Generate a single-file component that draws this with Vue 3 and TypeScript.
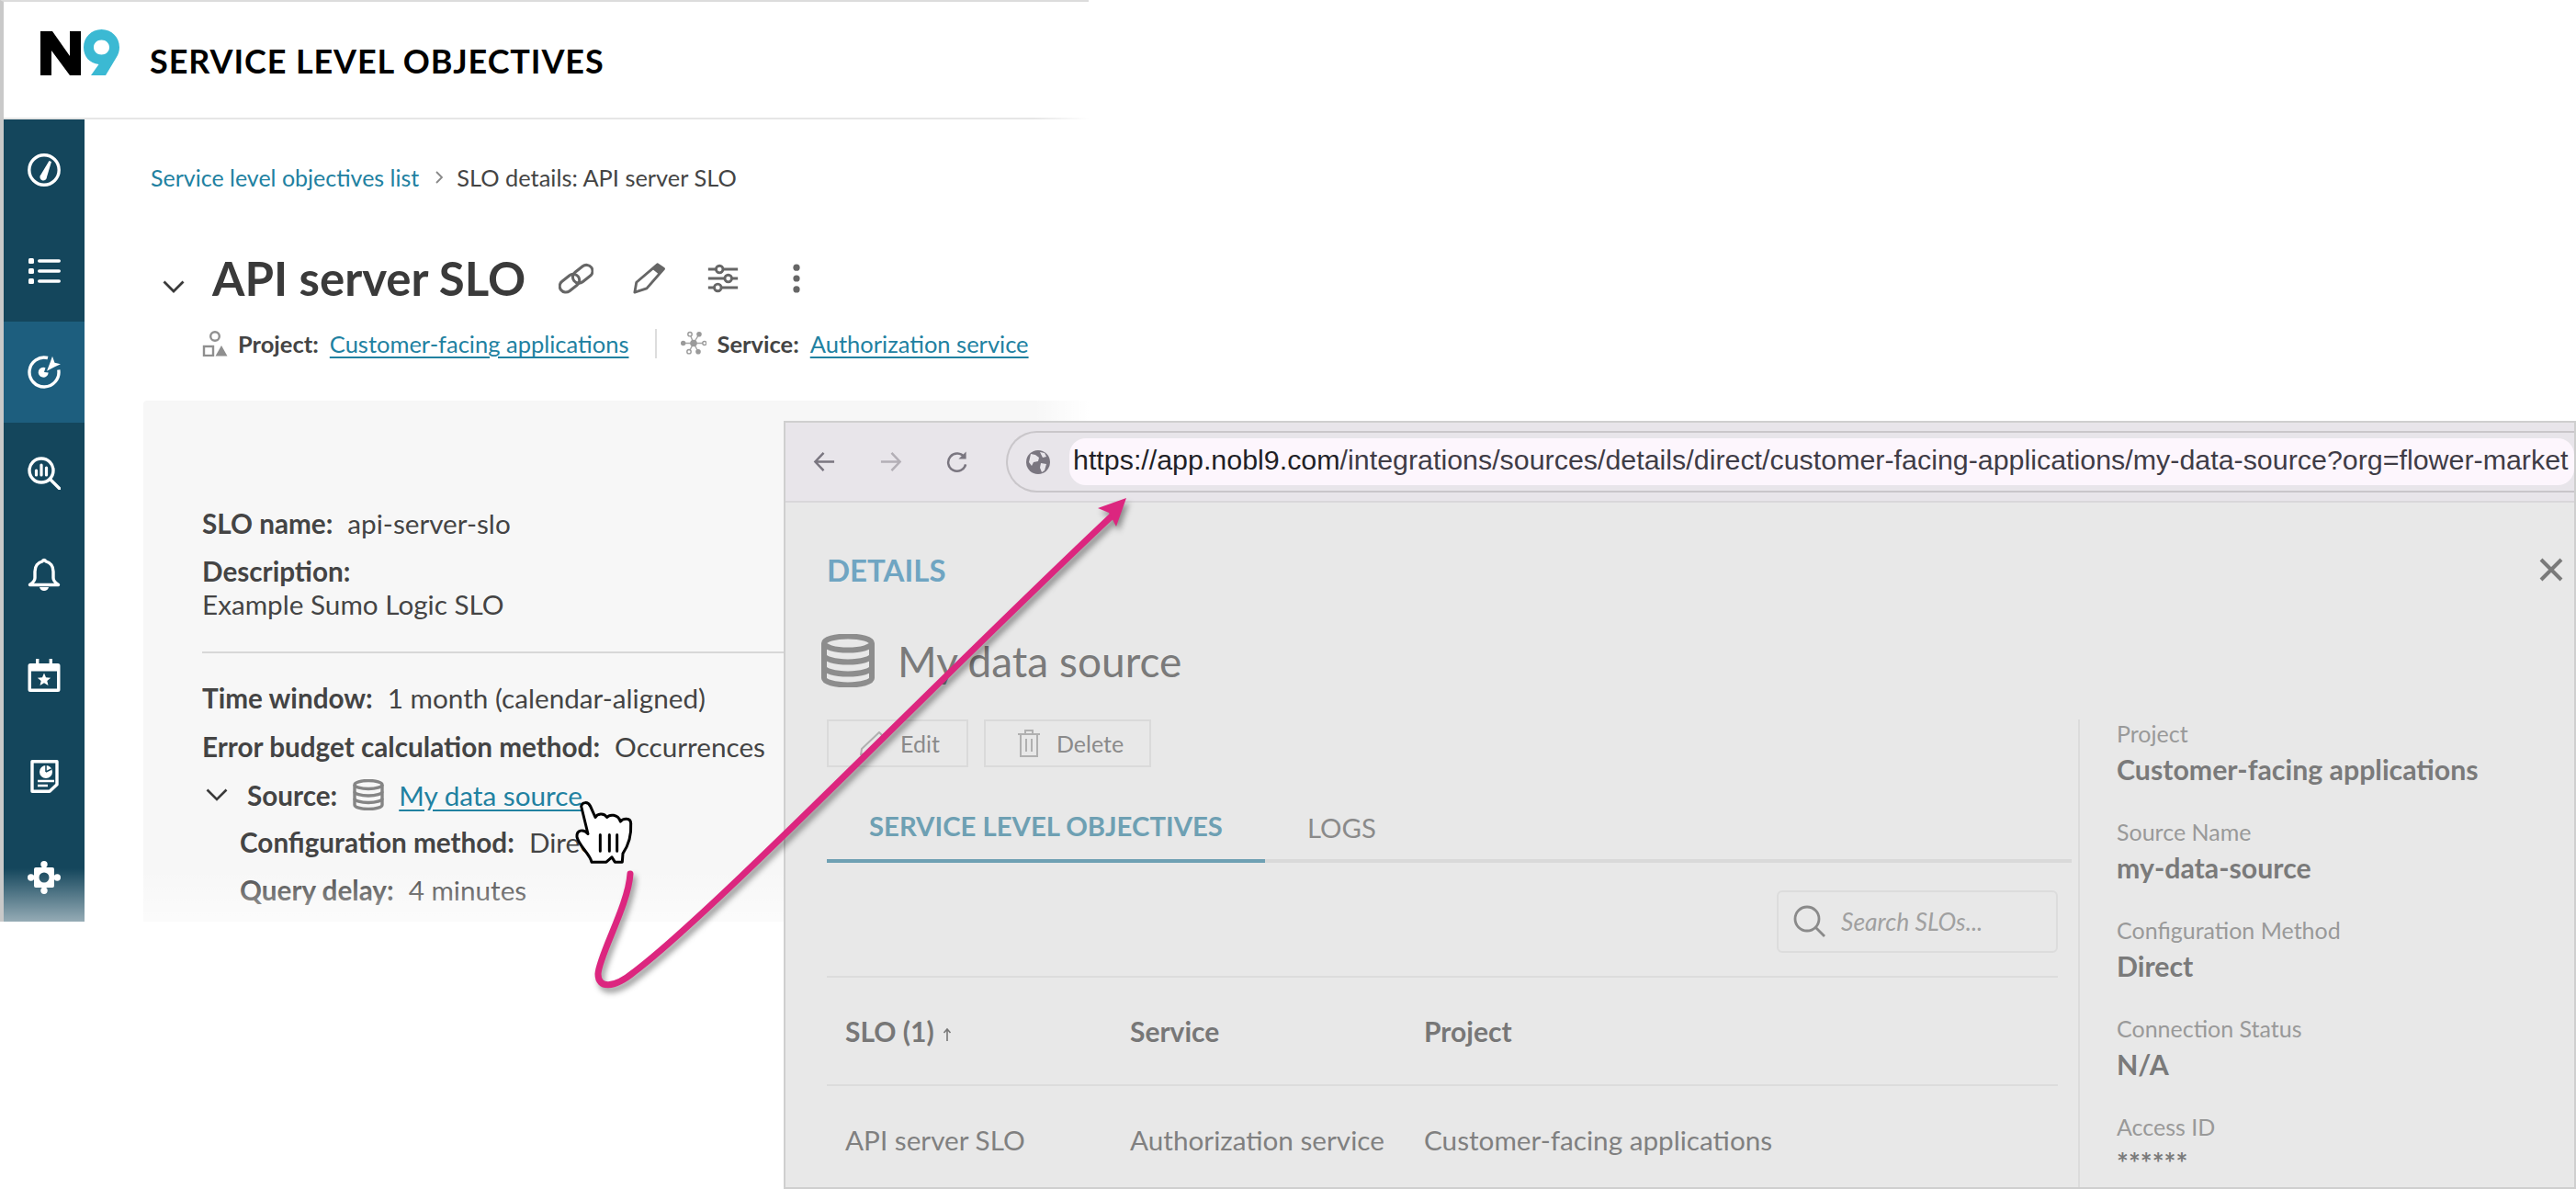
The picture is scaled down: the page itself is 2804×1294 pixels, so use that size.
<template>
  <div class="page">
    <div class="app">
      <header class="top">
        <svg class="logo" viewBox="0 0 88 52">
          <path d="M0 2h13l19 27V2h12v48H32L12 23v27H0z" fill="#000" />
          <path fill-rule="evenodd" d="M66.500 0C77.500 0 86 8.500 86 19.500c0 4-1.200 7.500-3 10.500L71 50H55l8.500-12C53.500 37 47 29.500 47 19.500 47 8.500 55.500 0 66.500 0zm0 11.500c-4.800 0-8.500 3.500-8.500 8s3.700 8 8.500 8 8.500-3.500 8.500-8-3.700-8-8.500-8z" fill="#3bb9d3" stroke="#fff" stroke-width="3" paint-order="stroke" />
        </svg>
        <h1>SERVICE LEVEL OBJECTIVES</h1>
      </header>
      <div class="body">
        <nav class="side">
          <div class="nav-item">
            <svg viewBox="0 0 36 36"><circle cx="18" cy="18" r="16.200" fill="none" stroke="#fff" stroke-width="3.400" /><path d="M23.500 8l2.500 1-5 16.500a3.800 3.800 0 1 1-6.500-2.500z" fill="#fff" /></svg>
          </div>
          <div class="nav-item">
            <svg viewBox="0 0 36 36"><g fill="#fff"><rect x="1" y="4" width="6" height="6" rx="1.500" /><rect x="1" y="15" width="6" height="6" rx="1.500" /><rect x="1" y="26" width="6" height="6" rx="1.500" /><rect x="11" y="5.300" width="25" height="3.400" rx="1.700" /><rect x="11" y="16.300" width="25" height="3.400" rx="1.700" /><rect x="11" y="27.300" width="25" height="3.400" rx="1.700" /></g></svg>
          </div>
          <div class="nav-item active">
            <svg viewBox="0 0 36 36"><path d="M22 2.500A16 16 0 1 0 33.800 15.500" fill="none" stroke="#fff" stroke-width="3.400" /><path d="M19.500 13.200a5.500 5.500 0 1 0 3.200 5.300l-4.700-.5z" fill="#fff" /><path d="M27 .8l2.500 7 6.500 1.500-6.500 3-8.500 4.500 3.500-9z" fill="#fff" /></svg>
          </div>
          <div class="nav-item">
            <svg viewBox="0 0 36 36"><circle cx="15" cy="15" r="13" fill="none" stroke="#fff" stroke-width="3.400" /><path d="M24.500 24.500L35 35" stroke="#fff" stroke-width="3.400" stroke-linecap="round" /><g stroke="#fff" stroke-width="3.200" stroke-linecap="round"><path d="M9.500 15v5" /><path d="M15 9v11" /><path d="M20.500 12v8" /></g></svg>
          </div>
          <div class="nav-item">
            <svg viewBox="0 0 36 36"><path d="M18 2.500c1 0 1.500 .6 1.700 1.400C25 5.100 28 9.500 28 15v7c0 3 2 5 5.500 7.500h-31C6 27 8 25 8 22v-7c0-5.500 3-9.900 8.300-11.100C16.500 3.100 17 2.500 18 2.500z" fill="none" stroke="#fff" stroke-width="3.400" stroke-linejoin="round" /><path d="M13 32h10c-.6 2.500-2.600 4-5 4s-4.400-1.500-5-4z" fill="#fff" /></svg>
          </div>
          <div class="nav-item">
            <svg viewBox="0 0 36 36"><path d="M9 0h3.400v5H23.600V0H27v5h6a2.500 2.500 0 0 1 2.500 2.500v26A2.500 2.500 0 0 1 33 36H3a2.500 2.500 0 0 1-2.500-2.500v-26A2.500 2.500 0 0 1 3 5h6zM4 13.500V32.500h28V13.500z" fill="#fff" /><path d="M18 15.500l2 4.800 5.200 .4-3.900 3.300 1.200 5-4.500-2.700-4.500 2.700 1.200-5-3.900-3.300 5.200-.4z" fill="#fff" /></svg>
          </div>
          <div class="nav-item">
            <svg viewBox="0 0 36 36"><path d="M5 1.700h27v25l-8 7.600H5z" fill="none" stroke="#fff" stroke-width="3.400" stroke-linejoin="round" /><circle cx="20" cy="13" r="7" fill="#fff" /><path d="M20 13V6M20 13l6-3" stroke="#14465c" stroke-width="1.500" /><path d="M11 23h18M11 28h11" stroke="#fff" stroke-width="2.600" /></svg>
          </div>
          <div class="nav-item">
            <svg viewBox="0 0 36 36"><g fill="#fff"><rect x="7" y="7" width="22" height="22" rx="2" /><circle cx="18" cy="3.700" r="3.700" /><circle cx="18" cy="32.300" r="3.700" /><circle cx="3.700" cy="18" r="3.700" /><circle cx="32.300" cy="18" r="3.700" /></g><circle cx="18" cy="18" r="5.500" fill="#14465c" /></svg>
          </div>
        </nav>
        <main class="main">
          <div class="crumbs">
            <a class="lnk plain">Service level objectives list</a>
            <svg class="crumb-sep" viewBox="0 0 10 16"><path d="M2 2l6 6-6 6" fill="none" stroke="#888" stroke-width="1.800" /></svg>
            <span>SLO details: API server SLO</span>
          </div>
          <div class="title-row">
            <svg class="title-chev" viewBox="0 0 24 14"><path d="M1.500 1.500L12 12 22.500 1.500" fill="none" stroke="#3a3a3a" stroke-width="2.800" /></svg>
            <h2>API server SLO</h2>
            <div class="tools">
              <svg viewBox="0 0 40 40"><g fill="none" stroke="#666" stroke-width="3.200"><rect x="0.100" y="18.500" width="25" height="14" rx="7" transform="rotate(-38 12.600 25.500)" /><rect x="15.100" y="8" width="25" height="14" rx="7" transform="rotate(-38 27.600 15)" /></g></svg>
              <svg viewBox="0 0 40 40"><path d="M29 4L5 24.500 3 36 16.800 31.500 36.400 9z" fill="none" stroke="#666" stroke-width="3" stroke-linejoin="round" /><path d="M29.400 3.500l7 5.300-5.400 6.700-7.500-6z" fill="#666" /></svg>
              <svg viewBox="0 0 40 40"><g fill="none" stroke="#666" stroke-width="3"><path d="M3 9.500h9M20 9.500h17M3 20h19M30 20h7M3 30.500h7M18 30.500h19" /><circle cx="16" cy="9.500" r="4" /><circle cx="26" cy="20" r="4" /><circle cx="14" cy="30.500" r="4" /></g></svg>
              <svg viewBox="0 0 40 40"><g fill="#666"><circle cx="20" cy="7.500" r="3.800" /><circle cx="20" cy="20" r="3.800" /><circle cx="20" cy="32.500" r="3.800" /></g></svg>
            </div>
          </div>
          <div class="meta">
            <svg class="meta-icon" viewBox="0 0 28 28"><g fill="none" stroke="#8f8f8f" stroke-width="2.400"><circle cx="14" cy="6" r="4.800" /><rect x="2" y="17" width="10" height="10" /></g><path d="M21 16l6.500 11.500h-13z" fill="#8f8f8f" /></svg>
            <b>Project:</b>
            <a class="lnk">Customer-facing applications</a>
            <i class="meta-sep"></i>
            <svg class="meta-icon" viewBox="0 0 28 28">
              <path d="M14 13.500L10 3.700M14 13.500L20 3.700M14 13.500H2.500M14 13.500H26M14 13.500L9 22.700M14 13.500L19 22.700" stroke="#a5a5a5" stroke-width="1.400" />
              <g fill="#9a9a9a"><circle cx="14" cy="13.500" r="3.800" /><circle cx="20" cy="3.700" r="2.800" /><circle cx="2.700" cy="13.500" r="2.700" /><circle cx="19" cy="22.700" r="2.800" /></g>
              <g fill="#fff" stroke="#9a9a9a" stroke-width="1.400"><circle cx="10" cy="3.700" r="2.200" /><circle cx="25.800" cy="13.500" r="2" /><circle cx="9" cy="22.700" r="2.200" /></g>
            </svg>
            <b>Service:</b>
            <a class="lnk">Authorization service</a>
          </div>
          <section class="panel">
            <div class="row"><b>SLO name:</b><span>api-server-slo</span></div>
            <div class="row desc-label"><b>Description:</b></div>
            <div class="row desc-text"><span>Example Sumo Logic SLO</span></div>
            <hr />
            <div class="row"><b>Time window:</b><span>1 month (calendar-aligned)</span></div>
            <div class="row next"><b>Error budget calculation method:</b><span>Occurrences</span></div>
            <div class="row next source">
              <svg class="src-chev" viewBox="0 0 24 14"><path d="M1.500 1.500L12 12 22.500 1.500" fill="none" stroke="#3a3a3a" stroke-width="2.600" /></svg>
              <b>Source:</b>
              <svg class="db" viewBox="0 0 34 34"><g fill="none" stroke="#858585" stroke-width="3.400"><ellipse cx="17" cy="6" rx="15" ry="4.500" /><path d="M2 6v22c0 2.500 6.700 4.500 15 4.500S32 30.500 32 28V6" /><path d="M2 13.500c0 2.500 6.700 4.500 15 4.500s15-2 15-4.500M2 21c0 2.500 6.700 4.500 15 4.500S32 23.500 32 21" /></g></svg>
              <a class="lnk">My data source</a>
            </div>
            <div class="row sub config"><b>Configuration method:</b><span>Direct</span></div>
            <div class="row sub query"><b>Query delay:</b><span>4 minutes</span></div>
          </section>
        </main>
      </div>
      <div class="fade-right"></div>
      <div class="fade-bottom"></div>
    </div>

    <div class="browser">
      <div class="toolbar">
        <svg class="nav-btn" viewBox="0 0 26 26"><path d="M24 13H3M12 3L2.500 13 12 23" fill="none" stroke="#7a7680" stroke-width="2.600" /></svg>
        <svg class="nav-btn" viewBox="0 0 26 26"><path d="M2 13h21M14 3l9.500 10L14 23" fill="none" stroke="#b3afb6" stroke-width="2.600" /></svg>
        <svg class="nav-btn" viewBox="0 0 26 26"><path d="M21.500 8A10 10 0 1 0 23 16" fill="none" stroke="#7a7680" stroke-width="2.600" /><path d="M23.500 1.500V10h-8.500z" fill="#7a7680" /></svg>
        <div class="omnibox">
          <svg class="globe" viewBox="0 0 26 26"><circle cx="13" cy="13" r="13" fill="#7a7680" /><path d="M5 4l5 1 4 3-1 4-5 1-2 4-3-4zM16 14l6 1-2 7-3 2-2-5zM15 2l5 1 2 4-4 1z" fill="#e8e5ea" /></svg>
          <div class="url"><span class="host">https://app.nobl9.com</span>/integrations/sources/details/direct/customer-facing-applications/my-data-source?org=flower-market</div>
        </div>
      </div>
      <div class="content">
        <div class="details-head">
          <span>DETAILS</span>
          <svg class="close" viewBox="0 0 26 26"><path d="M2 2l22 22M24 2L2 24" stroke="#7a7a7a" stroke-width="4" /></svg>
        </div>
        <div class="source-title">
          <svg class="db-big" viewBox="0 0 58 58"><g fill="none" stroke="#8d8d8d" stroke-width="6"><ellipse cx="29" cy="10" rx="26" ry="7.500" /><path d="M3 10v38c0 4 11.600 7.500 26 7.500S55 52 55 48V10" /><path d="M3 23c0 4 11.600 7.500 26 7.500S55 27 55 23M3 36c0 4 11.600 7.500 26 7.500S55 40 55 36" /></g></svg>
          <span>My data source</span>
        </div>
        <div class="split">
          <div class="left">
            <div class="actions">
              <button class="edit">
                <svg viewBox="0 0 26 26"><path d="M21 1l4 4L7 24l-6 1 1-6z" fill="none" stroke="#b0b0b0" stroke-width="2" /></svg>
                Edit
              </button>
              <button class="del">
                <svg viewBox="0 0 26 30"><path d="M1 5h24M9 5V1h8v4M4 5v24h18V5M10 10v14M16 10v14" fill="none" stroke="#b0b0b0" stroke-width="2" /></svg>
                Delete
              </button>
            </div>
            <div class="tabs">
              <div class="tab on">SERVICE LEVEL OBJECTIVES</div>
              <div class="tab">LOGS</div>
            </div>
            <div class="table">
              <div class="search">
                <svg viewBox="0 0 36 36"><circle cx="15" cy="15" r="13" fill="none" stroke="#8a8a8a" stroke-width="2.800" /><path d="M24.500 24.500L34 34" stroke="#8a8a8a" stroke-width="2.800" /></svg>
                <span>Search SLOs...</span>
              </div>
              <div class="tr th">
                <span>SLO (1)<svg class="sort" viewBox="0 0 10 16"><path d="M5 15V2M1.500 6L5 2l3.500 4" fill="none" stroke="#777" stroke-width="1.600" /></svg></span>
                <span>Service</span>
                <span>Project</span>
              </div>
              <div class="tr td">
                <span>API server SLO</span>
                <span>Authorization service</span>
                <span>Customer-facing applications</span>
              </div>
            </div>
          </div>
          <aside class="facts">
            <div v-for="f in facts" :key="f.label" class="fact">
              <div class="fact-label">{{ f.label }}</div>
              <div class="fact-value">{{ f.value }}</div>
            </div>
          </aside>
        </div>
      </div>
    </div>

    <svg class="arrow" viewBox="640 530 600 560">
      <path d="M686 951C684 985 652 1040 651 1060C651 1076 668 1076 690 1058C780 990 1020 740 1214 558" fill="none" stroke="#dc267f" stroke-width="7" stroke-linecap="round" />
      <path d="M1226 542L1195 553L1207 558L1215 573z" fill="#dc267f" />
    </svg>

    <svg class="hand" viewBox="195 150 195 215">
      <path d="M218 172C220 158 240 155 248 172L264 208C270 196 292 192 302 208C310 198 338 196 346 222C354 210 380 208 380 228C382 262 372 300 354 326L352 354H328L318 338L300 354H252C248 330 210 300 204 272C202 250 225 244 240 262z" fill="#fff" stroke="#000" stroke-width="9" stroke-linejoin="round" />
      <path d="M280 265V318M310 265V318M335 265V318" stroke="#000" stroke-width="9" stroke-linecap="round" />
    </svg>
  </div>
</template>

<script setup lang="ts">
interface Fact {
  label: string;
  value: string;
}

const facts: Fact[] = [
  { label: 'Project', value: 'Customer-facing applications' },
  { label: 'Source Name', value: 'my-data-source' },
  { label: 'Configuration Method', value: 'Direct' },
  { label: 'Connection Status', value: 'N/A' },
  { label: 'Access ID', value: '******' },
];
</script>

<style scoped>
.page {
  position: relative;
  width: 2804px;
  height: 1294px;
  overflow: hidden;
  background: #fff;
  font-family: Lato, 'Noto Sans', sans-serif;
  color: #444;
  font-size: 27px;
}

.app {
  position: relative;
  width: 1185px;
  height: 1003px;
  overflow: hidden;
  box-sizing: border-box;
  border-left: 4px solid #c9c9c9;
  border-top: 2px solid #dcdcdc;
}

.top {
  display: flex;
  align-items: center;
  height: 126px;
  padding-left: 40px;
  gap: 31px;
  border-bottom: 2px solid #e6e6e6;
}

.logo {
  width: 88px;
  height: 52px;
  margin-top: -14px;
}

.top h1 {
  margin: 2px 0 0;
  font-size: 36px;
  font-weight: 700;
  letter-spacing: 0.9px;
  color: #000;
  line-height: 40px;
}

.body {
  display: flex;
  height: 873px;
}

.side {
  flex: 0 0 88px;
  background: #14465c;
  overflow: hidden;
}

.nav-item {
  height: 110px;
  display: flex;
  align-items: center;
  justify-content: center;
}

.nav-item.active {
  background: #1d5e7e;
}

.nav-item svg {
  width: 36px;
  height: 36px;
}

.main {
  flex: 1;
  min-width: 0;
  padding-left: 64px;
}

.crumbs {
  display: flex;
  align-items: center;
  height: 30px;
  margin: 48px 0 0 8px;
  font-size: 25px;
}

.crumbs span {
  font-size: 25.400px;
}

.crumb-sep {
  width: 10px;
  height: 16px;
  margin: 0 14px 0 17px;
}

.lnk {
  color: #2181a1;
  text-decoration: underline;
  text-underline-offset: 4px;
}

.lnk.plain {
  text-decoration: none;
}

.title-row {
  display: flex;
  align-items: center;
  height: 60px;
  margin-top: 65px;
  padding-left: 21px;
}

.title-chev {
  width: 24px;
  height: 14px;
  margin-top: 18px;
}

.title-row h2 {
  margin: 0 0 0 30px;
  font-size: 51px;
  font-weight: 700;
  color: #3a3a3a;
  line-height: 60px;
}

.tools {
  display: flex;
  align-items: center;
  gap: 42px;
  margin-left: 36px;
}

.tools svg {
  width: 38px;
  height: 38px;
}

.meta {
  display: flex;
  align-items: center;
  height: 30px;
  margin-top: 26px;
  padding-left: 64px;
  font-size: 25.500px;
}

.meta-icon {
  width: 28px;
  height: 28px;
  margin-right: 11px;
}

.meta b {
  margin-right: 12px;
}

.meta-sep {
  width: 2px;
  height: 32px;
  background: #ddd;
  margin: 0 26px 0 29px;
}

.panel {
  margin-top: 47px;
  height: 567px;
  padding: 118px 0 0 64px;
  background: #f7f7f7;
  border-radius: 4px 0 0 0;
  font-size: 29.700px;
}

.row {
  display: flex;
  align-items: center;
  height: 30px;
  white-space: nowrap;
}

.row b {
  margin-right: 16px;
}

.desc-label {
  margin-top: 22px;
}

.desc-text {
  margin-top: 6px;
}

.panel hr {
  border: 0;
  height: 2px;
  background: #d8d8d8;
  margin: 37px 0 33px;
}

.next {
  margin-top: 23px;
}

.src-chev {
  width: 24px;
  height: 14px;
  margin: 0 21px 0 4px;
}

.source b {
  margin-right: 17px;
}

.db {
  width: 34px;
  height: 34px;
  margin-right: 16px;
}

.sub {
  padding-left: 41px;
}

.config {
  margin-top: 21px;
}

.query {
  margin-top: 22px;
}

.fade-right {
  position: absolute;
  top: 0;
  right: 0;
  bottom: 0;
  width: 60px;
  background: linear-gradient(to right, rgba(255, 255, 255, 0), #fff);
}

.fade-bottom {
  position: absolute;
  left: 0;
  right: 0;
  bottom: 0;
  height: 58px;
  background: linear-gradient(to bottom, rgba(255, 255, 255, 0), rgba(255, 255, 255, 0.55));
}

.browser {
  position: absolute;
  left: 853px;
  top: 458px;
  width: 1951px;
  height: 836px;
  box-sizing: border-box;
  border: 2px solid #cfcfcf;
  background: #e8e8e8;
  overflow: hidden;
}

.toolbar {
  display: flex;
  align-items: center;
  height: 87px;
  padding-left: 30px;
  background: #e8e5ea;
  border-bottom: 2px solid #d9d7da;
  box-sizing: border-box;
}

.nav-btn {
  width: 25px;
  height: 25px;
  margin-right: 47px;
}

.omnibox {
  flex: 1;
  min-width: 0;
  display: flex;
  align-items: center;
  height: 67px;
  margin: 0 -4px 0 -6px;
  padding-left: 20px;
  box-sizing: border-box;
  border: 2px solid #c9c6ca;
  border-right: 0;
  border-radius: 34px 0 0 34px;
}

.globe {
  width: 26px;
  height: 26px;
  margin-right: 21px;
}

.url {
  flex: 1;
  height: 51px;
  line-height: 47px;
  padding: 0 4px;
  margin-right: 4px;
  background: #fdf6fd;
  border-radius: 18px;
  font-family: 'Liberation Sans', Arial, sans-serif;
  font-size: 30.400px;
  color: #3f3c46;
  white-space: nowrap;
  overflow: hidden;
}

.host {
  color: #211f26;
}

.details-head {
  display: flex;
  align-items: center;
  justify-content: space-between;
  height: 40px;
  margin-top: 53px;
  padding: 0 12px 0 45px;
  font-size: 33px;
  font-weight: 700;
  color: #6fa5c2;
}

.close {
  width: 26px;
  height: 26px;
}

.source-title {
  display: flex;
  align-items: center;
  height: 58px;
  margin-top: 50px;
  padding-left: 39px;
  gap: 25px;
  font-size: 46px;
  color: #7a7a7a;
}

.db-big {
  width: 58px;
  height: 58px;
  filter: blur(0.6px);
}

.split {
  display: flex;
  margin-top: 35px;
}

.left {
  width: 1355px;
  margin-left: 45px;
}

.actions {
  display: flex;
  gap: 17px;
}

.actions button {
  display: flex;
  align-items: center;
  height: 52px;
  box-sizing: border-box;
  background: transparent;
  border: 2px solid #dadada;
  font: inherit;
  font-size: 25px;
  color: #8a8a8a;
  padding: 0;
}

.edit {
  width: 154px;
  padding-left: 34px !important;
  gap: 18px;
}

.edit svg {
  width: 26px;
  height: 26px;
}

.del {
  width: 182px;
  padding-left: 34px !important;
  gap: 17px;
}

.del svg {
  width: 26px;
  height: 30px;
}

.tabs {
  display: flex;
  margin-top: 25px;
  height: 79px;
  box-sizing: border-box;
  border-bottom: 4px solid #d9d9d9;
}

.tab {
  display: flex;
  align-items: center;
  height: 79px;
  box-sizing: border-box;
  padding: 2px 0 0 46px;
  font-size: 29.300px;
  color: #8a8a8a;
}

.tab.on {
  width: 477px;
  font-weight: 700;
  color: #6ea0b3;
  border-bottom: 4px solid #6ea0b3;
}

.table {
  margin-right: 15px;
}

.search {
  display: flex;
  align-items: center;
  width: 306px;
  height: 68px;
  box-sizing: border-box;
  margin: 30px 0 25px auto;
  padding-left: 16px;
  gap: 16px;
  border: 2px solid #dcdcdc;
  border-radius: 6px;
  font-size: 26.500px;
  font-style: italic;
  color: #a0a0a0;
}

.search svg {
  width: 36px;
  height: 36px;
}

.tr {
  display: grid;
  grid-template-columns: 310px 320px 1fr;
  align-items: center;
  height: 118px;
  box-sizing: border-box;
  padding-left: 20px;
  border-top: 2px solid #dcdcdc;
  font-size: 29.700px;
  color: #808080;
}

.th {
  font-weight: 700;
  font-size: 30px;
  color: #777;
}

.sort {
  width: 10px;
  height: 16px;
  margin-left: 9px;
}

.facts {
  margin-left: 7px;
  padding-left: 40px;
  border-left: 2px solid #dcdcdc;
  height: 510px;
  display: flex;
  flex-direction: column;
  gap: 35px;
}

.fact-label {
  height: 30px;
  line-height: 30px;
  font-size: 25px;
  color: #999;
}

.fact-value {
  height: 36px;
  line-height: 36px;
  margin-top: 6px;
  font-size: 30.300px;
  font-weight: 700;
  color: #7a7a7a;
}

.arrow {
  position: absolute;
  left: 640px;
  top: 530px;
  width: 600px;
  height: 560px;
  filter: drop-shadow(3px 5px 3px rgba(0, 0, 0, 0.4));
}

.hand {
  position: absolute;
  left: 625px;
  top: 870px;
  width: 65px;
  height: 72px;
}
</style>
